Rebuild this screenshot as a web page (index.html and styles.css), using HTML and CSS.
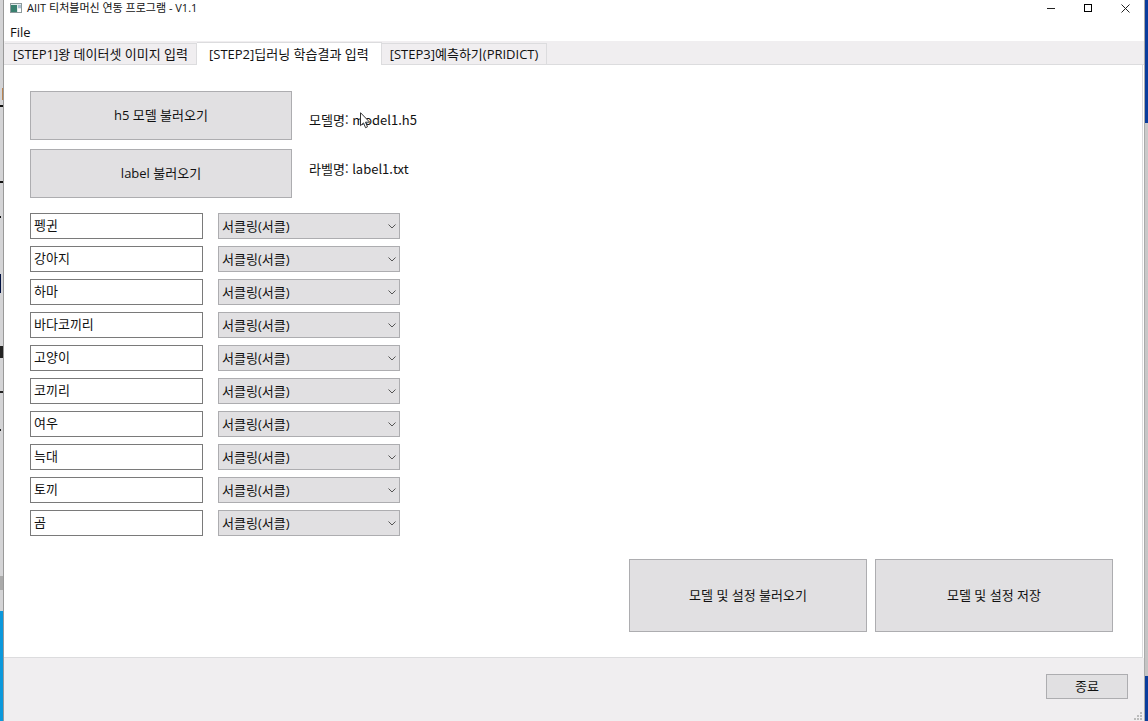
FILE: index.html
```html
<!DOCTYPE html>
<html lang="ko">
<head>
    <meta charset="UTF-8">
    <meta name="viewport" content="width=device-width, initial-scale=1.0">
    <title>AIIT 티처블머신 연동 프로그램 - V1.1</title>
    <link rel="stylesheet" href="styles.css">
</head>
<body>
    <div class="desktop-left"></div>
    <div class="window">
        <header class="title-bar">
            <svg class="app-icon" width="12" height="10" viewBox="0 0 12 10">
                <rect x="0.5" y="0.5" width="11" height="9" fill="#e4ecec" stroke="#8d9a9c"/>
                <rect x="1" y="2" width="6" height="7" fill="#39806f"/>
                <rect x="8" y="2" width="3" height="3" fill="#a9bfd0"/>
                <rect x="8" y="6" width="3" height="3" fill="#fff"/>
            </svg>
            <span class="title">AIIT 티처블머신 연동 프로그램 - V1.1</span>
            <div class="window-controls">
                <button type="button" aria-label="최소화">
                    <svg width="9" height="9" viewBox="0 0 9 9"><path d="M0 4.5h8" stroke="#222"/></svg>
                </button>
                <button type="button" aria-label="최대화">
                    <svg width="9" height="9" viewBox="0 0 9 9"><rect x="0.5" y="0.5" width="7" height="7" fill="none" stroke="#000"/></svg>
                </button>
                <button type="button" aria-label="닫기">
                    <svg width="9" height="9" viewBox="0 0 9 9"><path d="M0.5 0.5l8 8M8.5 0.5l-8 8" stroke="#222"/></svg>
                </button>
            </div>
        </header>
        <nav class="menu-bar">
            <button type="button">File</button>
        </nav>
        <div class="tab-bar" role="tablist">
            <button type="button" class="tab" role="tab">[STEP1]왕 데이터셋 이미지 입력</button>
            <button type="button" class="tab active" role="tab" aria-selected="true">[STEP2]딥러닝 학습결과 입력</button>
            <button type="button" class="tab" role="tab">[STEP3]예측하기(PRIDICT)</button>
        </div>
        <main class="panel">
            <div class="loaders">
                <button type="button" class="button">h5 모델 불러오기</button>
                <p class="file-name model-name">모델명: model1.h5
                    <svg class="cursor" width="11" height="17" viewBox="0 0 11 17">
                        <path d="M0.5 0.7v13l3-2.8 2 4.8 2-.9-2-4.6h4.2z" fill="#fff" stroke="#333"/>
                    </svg>
                </p>
                <button type="button" class="button">label 불러오기</button>
                <p class="file-name">라벨명: label1.txt</p>
            </div>
            <div class="mapping">
                <input type="text" aria-label="라벨 1" value="펭귄">
                <select aria-label="동작 1"><option>서클링(서클)</option></select>
                <input type="text" aria-label="라벨 2" value="강아지">
                <select aria-label="동작 2"><option>서클링(서클)</option></select>
                <input type="text" aria-label="라벨 3" value="하마">
                <select aria-label="동작 3"><option>서클링(서클)</option></select>
                <input type="text" aria-label="라벨 4" value="바다코끼리">
                <select aria-label="동작 4"><option>서클링(서클)</option></select>
                <input type="text" aria-label="라벨 5" value="고양이">
                <select aria-label="동작 5"><option>서클링(서클)</option></select>
                <input type="text" aria-label="라벨 6" value="코끼리">
                <select aria-label="동작 6"><option>서클링(서클)</option></select>
                <input type="text" aria-label="라벨 7" value="여우">
                <select aria-label="동작 7"><option>서클링(서클)</option></select>
                <input type="text" aria-label="라벨 8" value="늑대">
                <select aria-label="동작 8"><option>서클링(서클)</option></select>
                <input type="text" aria-label="라벨 9" value="토끼">
                <select aria-label="동작 9"><option>서클링(서클)</option></select>
                <input type="text" aria-label="라벨 10" value="곰">
                <select aria-label="동작 10"><option>서클링(서클)</option></select>
            </div>
            <div class="actions">
                <button type="button" class="button">모델 및 설정 불러오기</button>
                <button type="button" class="button">모델 및 설정 저장</button>
            </div>
        </main>
        <footer class="footer">
            <button type="button" class="button">종료</button>
            <svg class="grip" width="8" height="8" viewBox="0 0 8 8" fill="#bbb">
                <path d="M6 0h2v2h-2zM3 3h2v2h-2zM6 3h2v2h-2zM0 6h2v2h-2zM3 6h2v2h-2zM6 6h2v2h-2z"/>
            </svg>
        </footer>
    </div>
    <div class="desktop-right"></div>
</body>
</html>
```

FILE: styles.css
```css
* {
    box-sizing: border-box;
}
body {
    margin: 0;
    display: flex;
    min-height: 100vh;
    font-family: "Open Sans", "Noto Sans CJK KR", sans-serif;
    font-size: 13px;
    line-height: 18px;
    color: #111;
}
button, input, select {
    font: inherit;
    color: inherit;
    margin: 0;
    border-radius: 0;
}

/* slivers of the desktop on both sides of the window */
.desktop-left {
    width: 4px;
    border-right: 1px solid #999;
    background:
        linear-gradient(#111, #111) 0 105px / 4px 2px no-repeat,
        linear-gradient(#111, #111) 0 181px / 4px 2px no-repeat,
        linear-gradient(#111, #111) 0 216px / 1px 2px no-repeat,
        linear-gradient(#001040, #001040) 0 274px / 1px 19px no-repeat,
        linear-gradient(#222, #222) 0 346px / 4px 12px no-repeat,
        linear-gradient(#222, #222) 0 391px / 4px 2px no-repeat,
        linear-gradient(#222, #222) 0 429px / 1px 2px no-repeat,
        linear-gradient(#b98552, #b98552) 2px 88px / 2px 12px no-repeat,
        linear-gradient(#aaa, #aaa) 0 576px / 4px 14px no-repeat,
        linear-gradient(#d4d4d6 611px, #0b98dc 611px);
}
.desktop-right {
    width: 4px;
    border-left: 1px solid #aaa;
    background: linear-gradient(#0a3c9c 123px, #cacaca 123px, #c4c4c4 676px, #0a3c9c 676px);
}
.window {
    flex: 1;
    display: flex;
    flex-direction: column;
    background: #fff;
}

.title-bar {
    display: flex;
    align-items: center;
    height: 18px;
    padding-left: 6px;
}
.title {
    flex: 1;
    margin-left: 5px;
    font-size: 11px;
    line-height: 16px;
}
.app-icon, .title, .window-controls {
    margin-bottom: 2px;
}
.window-controls {
    display: flex;
}
.window-controls button {
    display: flex;
    justify-content: center;
    width: 37px;
    padding: 0;
    border: none;
    background: none;
}
.menu-bar {
    height: 23px;
    padding: 5px 6px 0;
}
.menu-bar button {
    padding: 0;
    border: none;
    background: none;
}

.tab-bar {
    display: flex;
    align-items: flex-end;
    height: 24px;
    padding-left: 1px;
    background: #f0eef0;
    box-shadow: inset 0 -1px #dcdcde;
}
.tab {
    height: 22px;
    padding: 0 8px;
    border: 1px solid #dcdcde;
    border-left: none;
    background: #f0eef0;
    white-space: nowrap;
}
.tab.active {
    height: 23px;
    padding: 0 12px;
    border-bottom: none;
    background: #fff;
}

.panel {
    flex: 1;
    display: flex;
    flex-direction: column;
    margin-right: 1px;
    padding: 26px 29px 25px 26px;
    border-right: 1px solid #dcdcde;
    border-bottom: 1px solid #dcdcde;
}
.button {
    padding: 0 0 1px;
    border: 1px solid #adadb0;
    background: #e1e0e2;
}
.loaders {
    display: grid;
    grid-template-columns: 262px 1fr;
    grid-auto-rows: 49px;
    gap: 9px 17px;
}
.file-name {
    align-self: center;
    margin: 0;
    padding-bottom: 9px;
    font-family: "Noto Sans CJK KR", sans-serif;
}
.model-name {
    position: relative;
    padding: 9px 0 0;
}
.cursor {
    position: absolute;
    left: 51px;
    top: 10px;
}
.mapping {
    display: grid;
    grid-template-columns: 173px 182px;
    grid-auto-rows: 26px;
    gap: 7px 15px;
    margin-top: 15px;
}
.mapping input {
    padding: 0 3px 2px;
    border: 1px solid #7a7a7a;
    background: #fff;
}
.mapping select {
    appearance: none;
    padding: 0 20px 0 3px;
    border: 1px solid #adadb0;
    background: #e1e0e2 url("data:image/svg+xml,%3Csvg xmlns='http://www.w3.org/2000/svg' width='8' height='5'%3E%3Cpath d='M.5 .5L4 4 7.500 .5' fill='none' stroke='%23555'/%3E%3C/svg%3E") right 3px center no-repeat;
}
.actions {
    display: flex;
    justify-content: flex-end;
    gap: 8px;
    margin-top: auto;
    padding-top: 20px;
}
.actions .button {
    width: 238px;
    height: 73px;
}

.footer {
    position: relative;
    display: flex;
    justify-content: flex-end;
    height: 63px;
    padding: 16px 16px 22px;
    background: #f0eef0;
}
.footer .button {
    width: 82px;
}
.grip {
    position: absolute;
    right: 2px;
    bottom: 1px;
}
```
